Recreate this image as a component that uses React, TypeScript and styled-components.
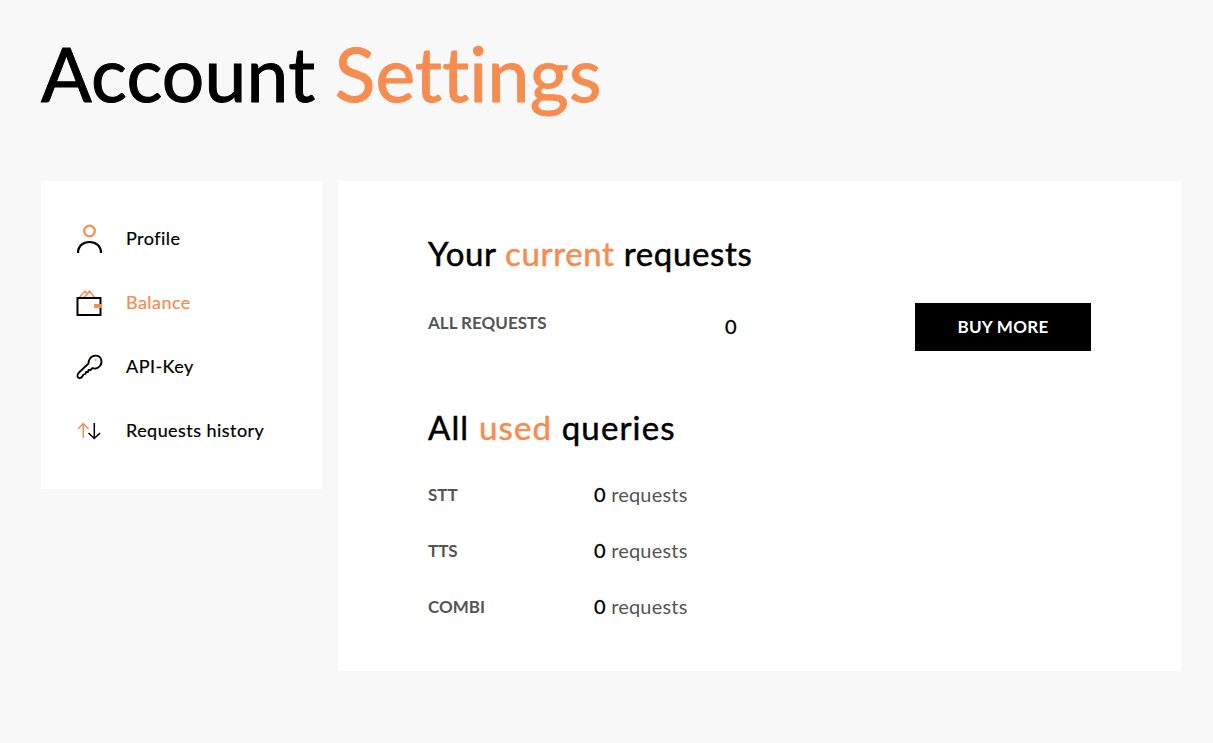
import styled, { createGlobalStyle } from "styled-components";

const GlobalStyle = createGlobalStyle`
  html, body {
    margin: 0;
    padding: 0;
    background: #f8f8f8;
    font-family: "Lato", "Liberation Sans", sans-serif;
  }
`;

const Page = styled.div`
  box-sizing: border-box;
  height: 743px;
  padding: 0 32px 0 41px;
`;

const Title = styled.h1`
  margin: 0;
  height: 181px;
  padding-top: 28px;
  box-sizing: border-box;
  font-family: "Lato", sans-serif;
  font-size: 75px;
  line-height: 90px;
  font-weight: 400;
  color: #000;
  letter-spacing: 0.25px;
  -webkit-text-stroke: 1px currentColor;
`;

const Accent = styled.span`
  color: #f68c50;
`;

const Columns = styled.div`
  display: flex;
  align-items: flex-start;
  gap: 16px;
`;

const Sidebar = styled.nav`
  box-sizing: border-box;
  width: 281px;
  height: 308px;
  background: #fff;
  padding: 38px 0 0 32px;
  display: flex;
  flex-direction: column;
  gap: 24px;
`;

const NavItem = styled.a<{ $active?: boolean }>`
  display: flex;
  align-items: center;
  height: 40px;
  gap: 21px;
  font-size: 18px;
  font-weight: 400;
  letter-spacing: 0.45px;
  -webkit-text-stroke: 0.2px currentColor;
  color: ${(p) => (p.$active ? "#f68c50" : "#000")};
`;

const NavLabel = styled.span`
  padding-bottom: 2px;
`;

const IconBox = styled.svg`
  width: 32px;
  height: 40px;
  flex: none;
`;

const Main = styled.main`
  box-sizing: border-box;
  width: 843px;
  height: 490px;
  background: #fff;
  padding: 49px 90px 0;
`;

const Heading = styled.h2<{ $spacing: number }>`
  margin: 0;
  font-family: "Lato", sans-serif;
  font-size: 33px;
  line-height: 46px;
  font-weight: 400;
  color: #000;
  letter-spacing: ${(p) => p.$spacing}px;
  -webkit-text-stroke: 0.5px currentColor;
`;

const RequestsRow = styled.div`
  display: flex;
  align-items: flex-start;
  margin-top: 27px;
  height: 48px;
  margin-bottom: 53px;
`;

const AllLabel = styled.div`
  width: 297px;
  font-size: 17px;
  line-height: 40px;
  font-weight: 700;
  color: #555;
`;

const AllValue = styled.div`
  width: 190px;
  font-size: 20px;
  line-height: 46px;
  font-weight: 400;
  color: #000;
  -webkit-text-stroke: 0.3px currentColor;
`;

const BuyButton = styled.button`
  width: 176px;
  height: 48px;
  border: 0;
  padding: 0 0 2px;
  background: #000;
  color: #fff;
  font-family: "Lato", sans-serif;
  font-size: 17px;
  font-weight: 700;
  letter-spacing: 0.3px;
`;

const QueryList = styled.div`
  margin-top: 16px;
  display: flex;
  flex-direction: column;
`;

const QueryRow = styled.div`
  display: flex;
  align-items: center;
  height: 56px;
`;

const QueryLabel = styled.div`
  width: 166px;
  font-size: 17px;
  font-weight: 700;
  color: #555;
`;

const QueryValue = styled.div`
  font-size: 20px;
  color: #555;
  letter-spacing: 0.2px;
`;

const Count = styled.span`
  color: #000;
  -webkit-text-stroke: 0.3px currentColor;
`;

const ORANGE = "#f68c50";

function ProfileIcon() {
  return (
    <IconBox viewBox="0 0 32 40" fill="none" strokeWidth="2.2">
      <circle cx="16.500" cy="12" r="5.300" stroke={ORANGE} />
      <path d="M5 34C5 27 10 23 16.500 23S28 27 28 34" stroke="#000" />
    </IconBox>
  );
}

function WalletIcon() {
  return (
    <IconBox viewBox="0 0 32 40" fill="none" strokeWidth="2">
      <path d="M6 15l6-7 2.500 3 2-3 5.500 7M10 15l4.500-4" stroke={ORANGE} strokeWidth="1.400" />
      <rect x="4.500" y="15" width="23" height="17" stroke="#000" />
      <rect x="21" y="21" width="8" height="4" fill={ORANGE} />
    </IconBox>
  );
}

function KeyIcon() {
  return (
    <IconBox viewBox="0 0 32 40" fill="none" strokeWidth="1.800">
      <path
        d="M17 11.500C19 8 26 7 28 12C30 17 26 22 21 21.500L19.500 21L17.500 23L15.500 23L15 25L13 25L12.500 27L10.500 27.500L9 30C7.500 31.500 5 31.500 4.500 29.500C4 28 5 26.500 6 25.500L15.500 16.500C15.500 14.500 16 13 17 11.500Z"
        stroke="#000"
        strokeLinejoin="round"
      />
      <circle cx="22.700" cy="13" r="1" fill={ORANGE} stroke="none" />
    </IconBox>
  );
}

function ArrowsIcon() {
  return (
    <IconBox viewBox="0 0 32 40" fill="none" strokeWidth="1.500">
      <path d="M10.300 27V12.500M5 18l5.300-5.500 5.300 5.500" stroke={ORANGE} />
      <path d="M21.300 12v15.500M15.500 22l5.800 5.500 5.800-5.500" stroke="#000" />
    </IconBox>
  );
}

export default function App() {
  return (
    <Page>
      <GlobalStyle />
      <Title>
        Account <Accent>Settings</Accent>
      </Title>
      <Columns>
        <Sidebar>
          <NavItem>
            <ProfileIcon />
            <NavLabel>Profile</NavLabel>
          </NavItem>
          <NavItem $active>
            <WalletIcon />
            <NavLabel>Balance</NavLabel>
          </NavItem>
          <NavItem>
            <KeyIcon />
            <NavLabel>API-Key</NavLabel>
          </NavItem>
          <NavItem>
            <ArrowsIcon />
            <NavLabel>Requests history</NavLabel>
          </NavItem>
        </Sidebar>
        <Main>
          <Heading $spacing={0.65}>
            Your <Accent>current</Accent> requests
          </Heading>
          <RequestsRow>
            <AllLabel>ALL REQUESTS</AllLabel>
            <AllValue>0</AllValue>
            <BuyButton>BUY MORE</BuyButton>
          </RequestsRow>
          <Heading $spacing={1.15}>
            All <Accent>used</Accent> queries
          </Heading>
          <QueryList>
            <QueryRow>
              <QueryLabel>STT</QueryLabel>
              <QueryValue>
                <Count>0</Count> requests
              </QueryValue>
            </QueryRow>
            <QueryRow>
              <QueryLabel>TTS</QueryLabel>
              <QueryValue>
                <Count>0</Count> requests
              </QueryValue>
            </QueryRow>
            <QueryRow>
              <QueryLabel>COMBI</QueryLabel>
              <QueryValue>
                <Count>0</Count> requests
              </QueryValue>
            </QueryRow>
          </QueryList>
        </Main>
      </Columns>
    </Page>
  );
}
